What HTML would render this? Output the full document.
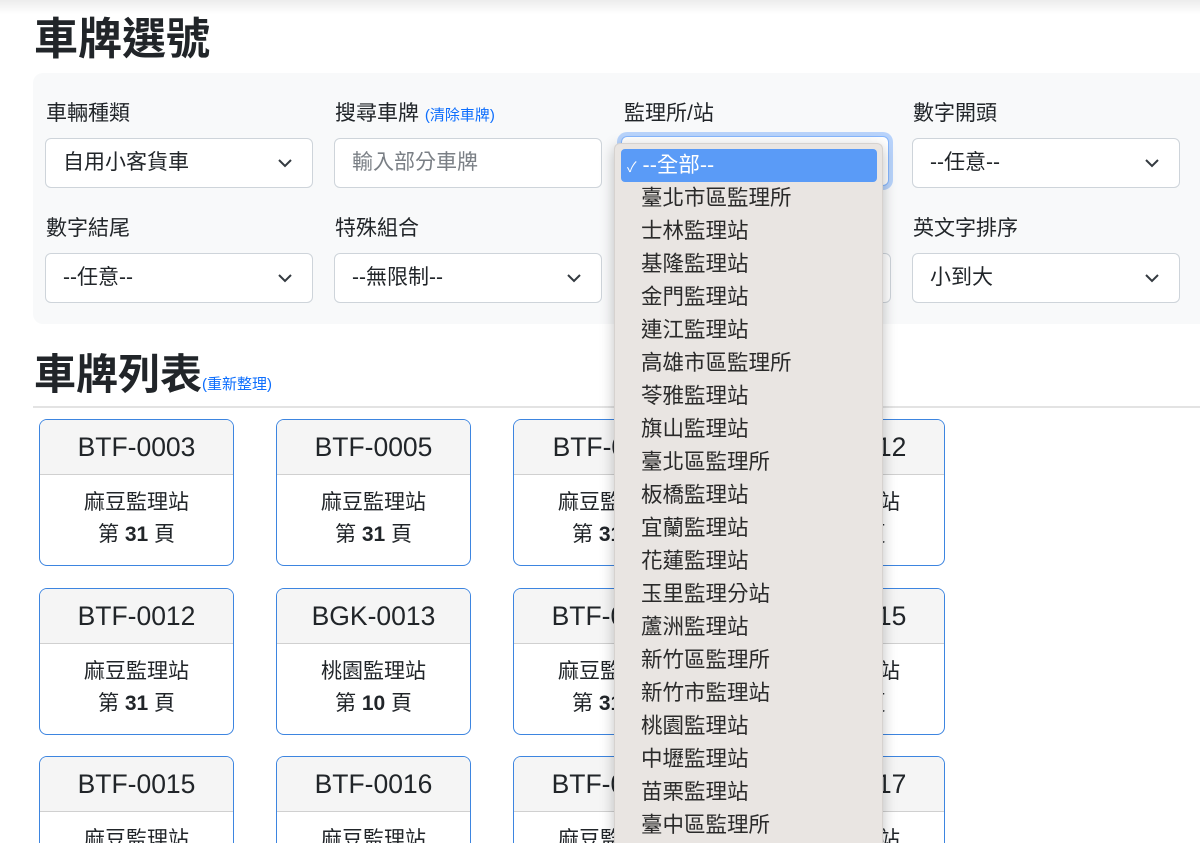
<!DOCTYPE html>
<html><head><meta charset="utf-8"><style>
*{box-sizing:border-box;margin:0;padding:0}
html,body{width:1200px;height:843px;overflow:hidden}
body{background:#fff;font-family:"Liberation Sans","Noto Sans CJK TC",sans-serif;color:#212529;position:relative}
.topsh{position:absolute;left:0;top:0;width:1200px;height:14px;background:linear-gradient(#ececec,#fff)}
.a{position:absolute}
h1{position:absolute;font-weight:bold;color:#212529;white-space:nowrap}
.panel{position:absolute;left:33px;top:73px;width:1167px;height:251px;background:#f8f9fa;border-radius:10px 0 0 10px}
.lbl{position:absolute;font-size:21px;color:#212529;white-space:nowrap}
.lbl span{color:#0d6efd;font-size:15px}
.sel{position:absolute;width:268px;height:50px;background:#fff;border:1px solid #ced4da;border-radius:6px;font-size:21px;padding:0 0 0 17px;line-height:48px;white-space:nowrap}
.sel svg{position:absolute;right:20px;top:17px}
.card{position:absolute;width:195px;height:147px;border:1.5px solid #3d85e0;border-radius:8px;overflow:hidden;background:#fff;text-align:center}
.card.cut{height:87px;border-bottom:none;border-radius:8px 8px 0 0}
.card .h{height:55px;background:#f5f5f5;border-bottom:1px solid #d0d0d0;font-size:26.5px;line-height:55px}
.card .b{font-size:21px;line-height:32px;padding-top:12px}
.dd{position:absolute;left:614px;top:143px;width:269px;height:700px;background:#e9e5e2;border-radius:6px 6px 0 0;box-shadow:0 4px 14px rgba(0,0,0,.25);border:1px solid #d6d2cf;border-bottom:none;overflow:hidden}
.dd div{position:absolute;left:26px;font-size:21.5px;color:#2a2a2a;white-space:nowrap;line-height:33px}
.hl{position:absolute;left:621px;top:149px;width:256px;height:33px;background:#5a9bf7;border-radius:4px;color:#fff;font-size:21.5px;line-height:33px;padding-left:6px}
</style></head><body>
<div class="topsh"></div>
<h1 style="left:34px;top:3px;font-size:44px">車牌選號</h1>
<div class="panel"></div>
<div class="lbl" style="left:46px;top:97px">車輛種類</div>
<div class="lbl" style="left:335px;top:97px">搜尋車牌 <span>(清除車牌)</span></div>
<div class="lbl" style="left:624px;top:97px">監理所/站</div>
<div class="lbl" style="left:913px;top:97px">數字開頭</div>
<div class="lbl" style="left:46px;top:212px">數字結尾</div>
<div class="lbl" style="left:335px;top:212px">特殊組合</div>
<div class="lbl" style="left:913px;top:212px">英文字排序</div>
<div class="sel" style="left:45px;top:138px">自用小客貨車<svg width="14" height="14" viewBox="0 0 14 14"><path d="M1 4l6 6 6-6" fill="none" stroke="#343a40" stroke-width="2"/></svg></div>
<div class="sel" style="left:334px;top:138px;color:#7a7f85">輸入部分車牌</div>
<div class="sel" style="left:621px;top:136px;box-shadow:0 0 0 4px #b8d3fb;border-color:#86b7fe"></div>
<div class="sel" style="left:912px;top:138px">--任意--<svg width="14" height="14" viewBox="0 0 14 14"><path d="M1 4l6 6 6-6" fill="none" stroke="#343a40" stroke-width="2"/></svg></div>
<div class="sel" style="left:45px;top:253px">--任意--<svg width="14" height="14" viewBox="0 0 14 14"><path d="M1 4l6 6 6-6" fill="none" stroke="#343a40" stroke-width="2"/></svg></div>
<div class="sel" style="left:334px;top:253px">--無限制--<svg width="14" height="14" viewBox="0 0 14 14"><path d="M1 4l6 6 6-6" fill="none" stroke="#343a40" stroke-width="2"/></svg></div>
<div class="sel" style="left:623px;top:253px"></div>
<div class="sel" style="left:912px;top:253px">小到大<svg width="14" height="14" viewBox="0 0 14 14"><path d="M1 4l6 6 6-6" fill="none" stroke="#343a40" stroke-width="2"/></svg></div>
<h1 style="left:34px;top:341px;font-size:42px">車牌列表<span style="font-size:15px;color:#0d6efd;font-weight:normal">(重新整理)</span></h1>
<div class="a" style="left:33px;top:406px;width:1167px;height:2px;background:#e3e3e3"></div>

<div class="card" style="left:39px;top:419px"><div class="h">BTF-0003</div><div class="b">麻豆監理站<br>第 <b>31</b> 頁</div></div>
<div class="card" style="left:276px;top:419px"><div class="h">BTF-0005</div><div class="b">麻豆監理站<br>第 <b>31</b> 頁</div></div>
<div class="card" style="left:513px;top:419px"><div class="h">BTF-0011</div><div class="b">麻豆監理站<br>第 <b>31</b> 頁</div></div>
<div class="card" style="left:750px;top:419px"><div class="h">BTF-0012</div><div class="b">麻豆監理站<br>第 <b>31</b> 頁</div></div>
<div class="card" style="left:39px;top:588px"><div class="h">BTF-0012</div><div class="b">麻豆監理站<br>第 <b>31</b> 頁</div></div>
<div class="card" style="left:276px;top:588px"><div class="h">BGK-0013</div><div class="b">桃園監理站<br>第 <b>10</b> 頁</div></div>
<div class="card" style="left:513px;top:588px"><div class="h">BTF-0013</div><div class="b">麻豆監理站<br>第 <b>31</b> 頁</div></div>
<div class="card" style="left:750px;top:588px"><div class="h">BTF-0015</div><div class="b">麻豆監理站<br>第 <b>31</b> 頁</div></div>
<div class="card cut" style="left:39px;top:756px"><div class="h">BTF-0015</div><div class="b">麻豆監理站</div></div>
<div class="card cut" style="left:276px;top:756px"><div class="h">BTF-0016</div><div class="b">麻豆監理站</div></div>
<div class="card cut" style="left:513px;top:756px"><div class="h">BTF-0016</div><div class="b">麻豆監理站</div></div>
<div class="card cut" style="left:750px;top:756px"><div class="h">BTF-0017</div><div class="b">麻豆監理站</div></div>

<div class="dd">
<div style="top:38px">臺北市區監理所</div>
<div style="top:71px">士林監理站</div>
<div style="top:104px">基隆監理站</div>
<div style="top:137px">金門監理站</div>
<div style="top:170px">連江監理站</div>
<div style="top:203px">高雄市區監理所</div>
<div style="top:236px">苓雅監理站</div>
<div style="top:269px">旗山監理站</div>
<div style="top:302px">臺北區監理所</div>
<div style="top:335px">板橋監理站</div>
<div style="top:368px">宜蘭監理站</div>
<div style="top:401px">花蓮監理站</div>
<div style="top:434px">玉里監理分站</div>
<div style="top:467px">蘆洲監理站</div>
<div style="top:500px">新竹區監理所</div>
<div style="top:533px">新竹市監理站</div>
<div style="top:566px">桃園監理站</div>
<div style="top:599px">中壢監理站</div>
<div style="top:632px">苗栗監理站</div>
<div style="top:665px">臺中區監理所</div>
</div>
<div class="hl"><span style="font-size:14px">✓</span> --全部--</div>
</body></html>
